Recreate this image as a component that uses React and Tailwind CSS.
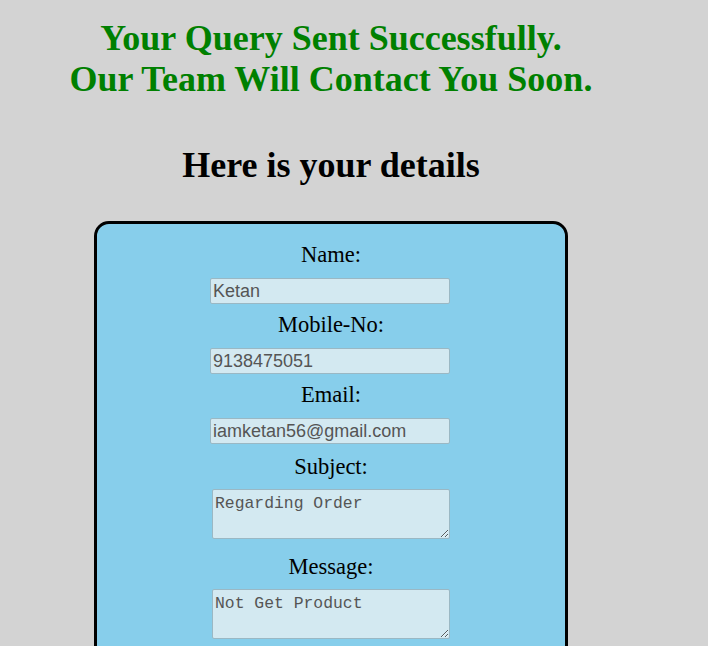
export default function App() {
  const fields = [
    { label: 'Name:', value: 'Ketan' },
    { label: 'Mobile-No:', value: '9138475051' },
    { label: 'Email:', value: 'iamketan56@gmail.com' },
  ];
  const areas = [
    { label: 'Subject:', value: 'Regarding Order' },
    { label: 'Message:', value: 'Not Get Product' },
  ];

  return (
    <div className="min-h-[646px] bg-[#d3d3d3] font-['Liberation_Serif',serif] text-black">
      <div className="w-[662px] flex flex-col items-center">
        <h1 className="mt-[18px] text-[36px] leading-[41px] font-bold text-[#008000] text-center">
          Your Query Sent Successfully.
          <br />
          Our Team Will Contact You Soon.
        </h1>
        <h2 className="mt-[45px] text-[36px] leading-[41px] font-bold text-center">Here is your details</h2>

        <div className="mt-[35px] w-[474px] h-[440px] bg-[#87ceeb] border-[3px] border-black rounded-[15px] flex flex-col items-center pt-[19px]">
          {fields.map((f) => (
            <div key={f.label} className="flex flex-col items-center">
              <label className="text-[22.5px] leading-[24px]">{f.label}</label>
              <input
                readOnly
                value={f.value}
                className="mt-[11px] mb-[9px] -translate-x-[1px] w-[240px] h-[26px] pl-[2px] pr-[3px] bg-[#d3e9f1] border border-[#9ab8c4] rounded-[2px] font-['Liberation_Sans',sans-serif] text-[18px] text-[#555] outline-none"
              />
            </div>
          ))}
          {areas.map((a) => (
            <div key={a.label} className="flex flex-col items-center pt-[2px]">
              <label className="text-[22.5px] leading-[24px]">{a.label}</label>
              <textarea
                readOnly
                value={a.value}
                className="mt-[10px] mb-[14px] w-[238px] h-[50px] px-[2px] pt-[4px] bg-[#d3e9f1] border border-[#9ab8c4] rounded-[2px] font-['Liberation_Mono',monospace] text-[16.4px] leading-[19px] text-[#555] outline-none"
              />
            </div>
          ))}
        </div>
      </div>
    </div>
  );
}
